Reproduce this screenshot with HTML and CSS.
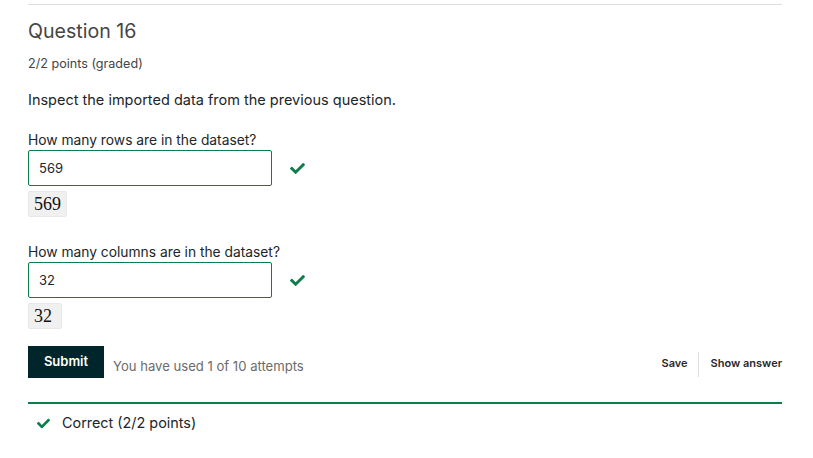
FILE: index.html
```html
<!DOCTYPE html>
<html>
<head>
<meta charset="utf-8">
<link rel="stylesheet" href="styles.css">
</head>
<body>
<div class="problem">
  <div class="top-rule"></div>
  <h3 class="title">Question 16</h3>
  <div class="points">2/2 points (graded)</div>
  <p class="prompt">Inspect the imported data from the previous question.</p>

  <div class="field">
    <label class="label">How many rows are in the dataset?</label>
    <div class="input-row">
      <div class="input">569</div>
      <svg class="check" viewBox="0 0 512 512" width="15" height="15"><path d="M173.9 439.4l-166.4-166.4c-10-10-10-26.2 0-36.2l36.2-36.2c10-10 26.2-10 36.2 0L192 312.7 432.1 72.6c10-10 26.2-10 36.2 0l36.2 36.2c10 10 10 26.2 0 36.2l-294.4 294.4c-10 10-26.2 10-36.2 0z"/></svg>
    </div>
    <div class="preview">569</div>
  </div>

  <div class="field second">
    <label class="label">How many columns are in the dataset?</label>
    <div class="input-row">
      <div class="input">32</div>
      <svg class="check" viewBox="0 0 512 512" width="15" height="15"><path d="M173.9 439.4l-166.4-166.4c-10-10-10-26.2 0-36.2l36.2-36.2c10-10 26.2-10 36.2 0L192 312.7 432.1 72.6c10-10 26.2-10 36.2 0l36.2 36.2c10 10 10 26.2 0 36.2l-294.4 294.4c-10 10-26.2 10-36.2 0z"/></svg>
    </div>
    <div class="preview">32</div>
  </div>

  <div class="actions">
    <button class="submit">Submit</button>
    <span class="attempts">You have used 1 of 10 attempts</span>
    <div class="links">
      <span class="link save">Save</span>
      <span class="link show">Show answer</span>
    </div>
  </div>

  <div class="feedback">
    <svg class="check small" viewBox="0 0 512 512" width="13" height="13"><path d="M173.9 439.4l-166.4-166.4c-10-10-10-26.2 0-36.2l36.2-36.2c10-10 26.2-10 36.2 0L192 312.7 432.1 72.6c10-10 26.2-10 36.2 0l36.2 36.2c10 10 10 26.2 0 36.2l-294.4 294.4c-10 10-26.2 10-36.2 0z"/></svg>
    <span class="feedback-text">Correct (2/2 points)</span>
  </div>
</div>
</body>
</html>
```
FILE: styles.css
```css
html, body {
  margin: 0;
  padding: 0;
  background: #ffffff;
}

body {
  font-family: "Inter", "Noto Sans", "Liberation Sans", sans-serif;
  color: #212529;
}

.problem {
  width: 754px;
  margin-left: 28px;
  padding-top: 4px;
}

.top-rule {
  height: 0;
  border-top: 1px solid #dedede;
}

.title {
  margin: 14px 0 0;
  font-size: 19.6px;
  line-height: 24px;
  font-weight: 400;
  color: #454545;
}

.points {
  margin-top: 13px;
  font-size: 12.6px;
  line-height: 16px;
  color: #454545;
}

.prompt {
  margin: 19px 0 0;
  font-size: 14.5px;
  line-height: 18px;
  color: #212529;
}

.field {
  margin-top: 22px;
}

.field.second {
  margin-top: 26px;
}

.label {
  display: block;
  font-size: 13.8px;
  line-height: 18px;
  color: #212529;
}

.input-row {
  display: flex;
  align-items: center;
  margin-top: 1px;
}

.input {
  box-sizing: border-box;
  width: 244px;
  height: 36px;
  border: 1px solid #0d7d4d;
  border-radius: 2px;
  padding: 0 10px;
  font-size: 13px;
  line-height: 34px;
  color: #212529;
}

.check {
  fill: #0d7d4d;
  margin-left: 18px;
}

.preview {
  display: inline-block;
  margin-top: 5px;
  padding: 0 5px;
  min-width: 34px;
  height: 26px;
  line-height: 25px;
  background: #f0f0f0;
  border: 1px solid #e8e8e8;
  box-sizing: border-box;
  border-radius: 2px;
  font-family: "Liberation Serif", "Times New Roman", serif;
  font-size: 18px;
  color: #111111;
}

.actions {
  display: flex;
  align-items: flex-start;
  margin-top: 17px;
}

.submit {
  width: 76px;
  height: 32px;
  border: 0;
  border-radius: 0;
  background: #00262b;
  color: #ffffff;
  font-family: "Inter", "Noto Sans", "Liberation Sans", sans-serif;
  font-size: 13px;
  font-weight: 600;
  padding: 0 0 2px;
}

.attempts {
  margin-left: 9px;
  margin-top: 11px;
  font-size: 13.1px;
  line-height: 18px;
  color: #6b6b6b;
}

.links {
  margin-left: auto;
  display: flex;
  align-items: stretch;
  margin-top: 6px;
  height: 25px;
}

.link {
  font-size: 11px;
  font-weight: 600;
  line-height: 23px;
  color: #2a2a2a;
}

.save {
  padding-right: 10px;
  border-right: 1px solid #e0e0e0;
}

.show {
  padding-left: 12px;
}

.feedback {
  margin-top: 24px;
  border-top: 2px solid #0d7d4d;
  display: flex;
  align-items: center;
  padding: 10px 0 0 9px;
}

.check.small {
  margin-left: 0;
}

.feedback-text {
  margin-left: 12px;
  font-size: 14.4px;
  line-height: 18px;
  color: #212529;
}
```
